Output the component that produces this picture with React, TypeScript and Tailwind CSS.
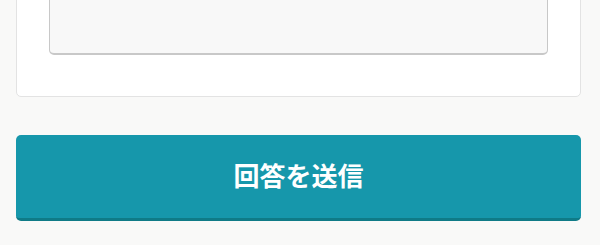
export default function App() {
  return (
    <div
      className="min-h-[245px] overflow-hidden bg-[#f9f9f8]"
      style={{ fontFamily: '"Noto Sans", "Noto Sans CJK JP", sans-serif' }}
    >
      <div className="ml-4 mr-[19px] -mt-[99px]">
        {/* answer card, top scrolled out of view */}
        <div className="rounded-[5px] border border-[#e3e3e3] bg-white px-8 pt-8 pb-[41px]">
          <textarea
            className="block h-[121px] w-full resize-none rounded-[5px] border border-b-2 border-[#c8c8c8] bg-[#f8f8f8] outline-none"
            defaultValue=""
          />
        </div>

        <button className="mt-[38px] flex h-[86px] w-full items-center justify-center rounded-[5px] border-b-[3px] border-[#0f7b87] bg-[#1697ab] text-[26px] font-bold text-white">
          回答を送信
        </button>
      </div>
    </div>
  );
}
